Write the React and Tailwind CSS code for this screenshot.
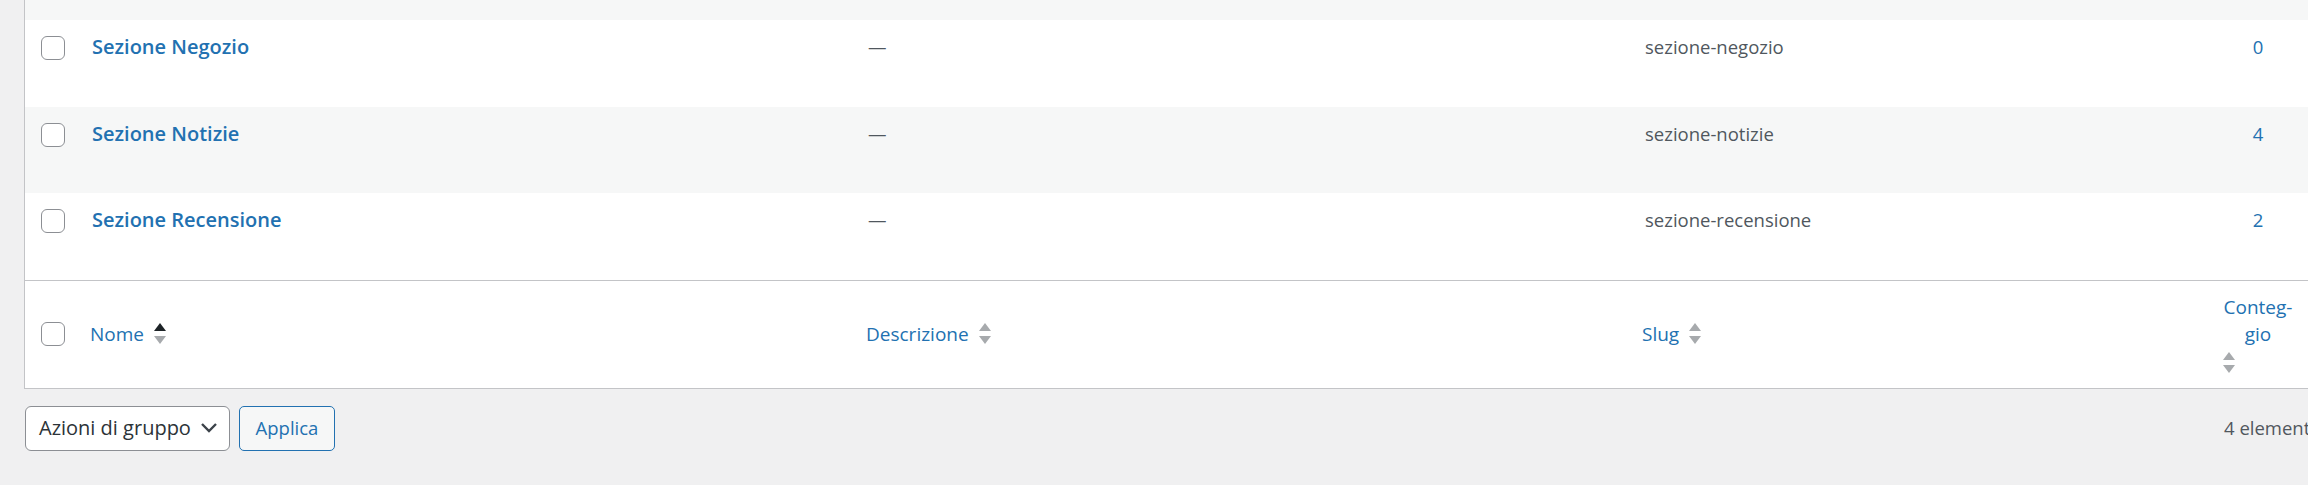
const rows = [
  { name: "Sezione Negozio", slug: "sezione-negozio", count: 0, striped: false },
  { name: "Sezione Notizie", slug: "sezione-notizie", count: 4, striped: true },
  { name: "Sezione Recensione", slug: "sezione-recensione", count: 2, striped: false },
];

const cols = "grid grid-cols-[52px_776px_777px_573px_110px]";

function Check() {
  return <div className="w-[24px] h-[24px] rounded-[6px] border border-[#8c8f94] bg-white" />;
}

function SortArrows({ active }) {
  return (
    <svg width="12" height="22" viewBox="0 0 12 22" className="shrink-0">
      <polygon points="0,8 6,0 12,8" fill={active ? "#1d2327" : "#a7aaad"} />
      <polygon points="0,13 12,13 6,21" fill="#a7aaad" />
    </svg>
  );
}

function SortLink({ label, active }) {
  return (
    <div className="flex items-center gap-[10px] text-[#2271b1]">
      <span>{label}</span>
      <SortArrows active={active} />
    </div>
  );
}

export default function App() {
  return (
    <div className="w-[2308px] h-[485px] overflow-hidden bg-[#f0f0f1] text-[18.5px] font-['Open_Sans',sans-serif]">
      <div className="pl-[24px]">
        <div className="w-[2290px] border-l border-b border-[#c3c4c7] bg-white">
          <div className="h-[20px] bg-[#f6f7f7]" />
          {rows.map((r, i) => (
            <div key={i} className={`${cols} h-[86.5px] ${r.striped ? "bg-[#f6f7f7]" : "bg-white"}`}>
              <div className="pl-[16px] pt-[16px]">
                <Check />
              </div>
              <div className="pl-[15px] pt-[12px] leading-[29px] text-[20px] font-semibold text-[#2271b1]">{r.name}</div>
              <div className="pl-[15px] pt-[12px] leading-[29px] text-[#50575e]">—</div>
              <div className="pl-[15px] pt-[12px] leading-[29px] text-[#50575e]">{r.slug}</div>
              <div className="pt-[12px] leading-[29px] text-center text-[#2271b1]">{r.count}</div>
            </div>
          ))}
          <div className={`${cols} h-[108px] items-center border-t border-[#c3c4c7] text-[19px]`}>
            <div className="pl-[16px]">
              <Check />
            </div>
            <div className="pl-[13px]">
              <SortLink label="Nome" active />
            </div>
            <div className="pl-[13px]">
              <SortLink label="Descrizione" />
            </div>
            <div className="pl-[12px]">
              <SortLink label="Slug" />
            </div>
            <div className="px-[6px] flex flex-col text-[#2271b1] leading-[27px]">
              <span className="text-center">Conteg-</span>
              <span className="text-center">gio</span>
              <div className="pl-[14px] pt-[4px]">
                <SortArrows />
              </div>
            </div>
          </div>
        </div>
      </div>
      <div className="w-[2299px] ml-[25px] mt-[17px] flex items-center gap-[9px]">
        <div className="w-[205px] h-[45px] rounded-[6px] border border-[#8c8f94] bg-white flex items-center justify-between pl-[13px] pr-[11px] text-[20px] text-[#2c3338]">
          <span>Azioni di gruppo</span>
          <svg width="18" height="12" viewBox="0 0 18 12">
            <path d="M2 2 L9 9 L16 2" fill="none" stroke="#3c434a" strokeWidth="2.4" />
          </svg>
        </div>
        <div className="w-[96px] h-[45px] rounded-[5px] border border-[#2271b1] bg-[#f6f7f7] flex items-center justify-center text-[#2271b1]">
          Applica
        </div>
        <span className="ml-auto w-[100px] whitespace-nowrap text-[#50575e]">4 elementi</span>
      </div>
    </div>
  );
}
